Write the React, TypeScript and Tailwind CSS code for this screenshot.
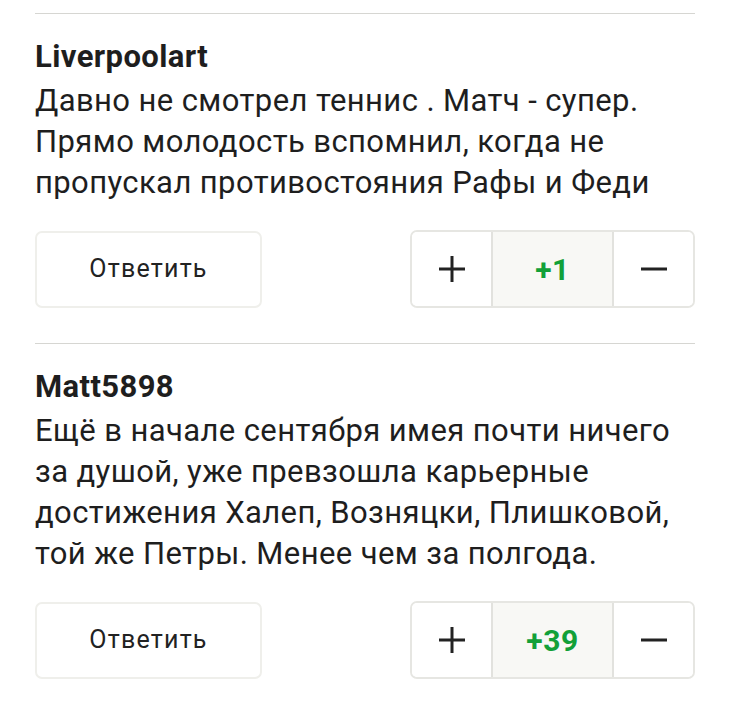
import { Fragment } from 'react';

type Comment = {
  author: string;
  text: string[];
  score: string;
};

const comments: Comment[] = [
  {
    author: 'Liverpoolart',
    text: [
      'Давно не смотрел теннис . Матч - супер.',
      'Прямо молодость вспомнил, когда не',
      'пропускал противостояния Рафы и Феди',
    ],
    score: '+1',
  },
  {
    author: 'Matt5898',
    text: [
      'Ещё в начале сентября имея почти ничего',
      'за душой, уже превзошла карьерные',
      'достижения Халеп, Возняцки, Плишковой,',
      'той же Петры. Менее чем за полгода.',
    ],
    score: '+39',
  },
];

function Plus() {
  return (
    <svg width="28" height="28" viewBox="0 0 28 28" fill="none">
      <path d="M14 1v26M1 14h26" stroke="#222" strokeWidth="3" />
    </svg>
  );
}

function Minus() {
  return (
    <svg width="28" height="28" viewBox="0 0 28 28" fill="none">
      <path d="M1 14h26" stroke="#222" strokeWidth="3" />
    </svg>
  );
}

function CommentItem({ c }: { c: Comment }) {
  return (
    <div className="border-t border-[#d6d6d2] pt-[23px] pb-[35px]">
      <div className="text-[31px] leading-[40px] font-bold text-[#1e1e1e] tracking-[0.4px]">{c.author}</div>
      <p className="mt-[3px] text-[31px] leading-[41px] text-[#1e1e1e] tracking-[0.4px]">
        {c.text.map((line, i) => (
          <Fragment key={i}>
            {line}
            {i < c.text.length - 1 && <br />}
          </Fragment>
        ))}
      </p>
      <div className="mt-[27px] flex items-center justify-between">
        <button className="w-[227px] h-[77px] rounded-[7px] border-2 border-[#efefeb] bg-white text-[25px] tracking-[1.2px] text-[#222]">
          Ответить
        </button>
        <div className="flex h-[78px] w-[285px] rounded-[7px] border-2 border-[#e6e6e2] overflow-hidden">
          <button className="w-[79px] flex items-center justify-center bg-white">
            <Plus />
          </button>
          <div className="flex-1 flex items-center justify-center bg-[#f8f8f5] border-x-2 border-[#e2e2de] text-[30px] font-bold text-[#12a038] tracking-[0.5px]">
            {c.score}
          </div>
          <button className="w-[79px] flex items-center justify-center bg-white">
            <Minus />
          </button>
        </div>
      </div>
    </div>
  );
}

export default function App() {
  return (
    <main
      className="w-[730px] h-[701px] bg-white overflow-hidden pt-[13px] pl-[35px] pr-[35px]"
      style={{ fontFamily: 'Roboto, "Noto Sans", sans-serif' }}
    >
      {comments.map((c) => (
        <CommentItem key={c.author} c={c} />
      ))}
    </main>
  );
}
